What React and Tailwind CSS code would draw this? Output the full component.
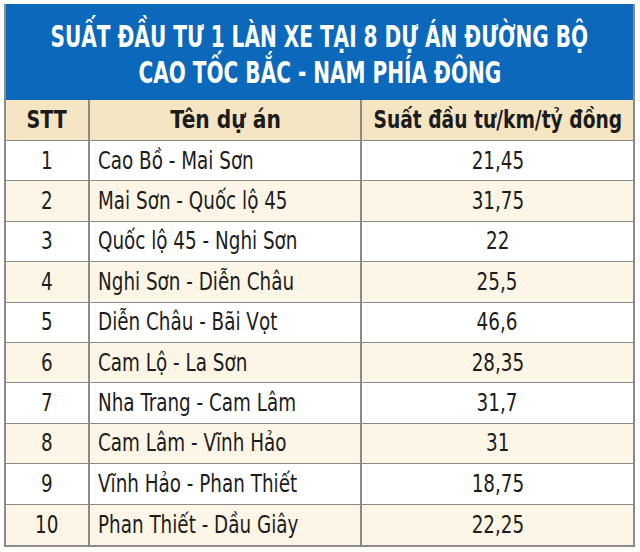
const rows = [
  ["1", "Cao Bồ - Mai Sơn", "21,45"],
  ["2", "Mai Sơn - Quốc lộ 45", "31,75"],
  ["3", "Quốc lộ 45 - Nghi Sơn", "22"],
  ["4", "Nghi Sơn - Diễn Châu", "25,5"],
  ["5", "Diễn Châu - Bãi Vọt", "46,6"],
  ["6", "Cam Lộ - La Sơn", "28,35"],
  ["7", "Nha Trang - Cam Lâm", "31,7"],
  ["8", "Cam Lâm - Vĩnh Hảo", "31"],
  ["9", "Vĩnh Hảo - Phan Thiết", "18,75"],
  ["10", "Phan Thiết - Dầu Giây", "22,25"],
];

const cols = "grid grid-cols-[84px_272px_minmax(0,1fr)]";
const cell = "flex items-center border-[#8a8a8a]";
const txt = "inline-block whitespace-nowrap scale-x-[0.85]";

export default function App() {
  return (
    <div className="w-[640px] h-[552px] bg-white pt-[4px] pl-[4px] font-['DejaVu_Sans_Condensed','DejaVu_Sans',sans-serif] font-stretch-condensed text-[#1c1c1c]">
      <div className="w-[631px] border-l-2 border-r-2 border-b-2 border-[#8a8a8a]">
        <div className="h-[96px] bg-[#0b68bb] flex flex-col items-center justify-center text-white font-bold text-[31px] leading-[36px] pt-[4px]">
          <div className="whitespace-nowrap scale-x-[0.72]">SUẤT ĐẦU TƯ 1 LÀN XE TẠI 8 DỰ ÁN ĐƯỜNG BỘ</div>
          <div className="whitespace-nowrap scale-x-[0.72]">CAO TỐC BẮC - NAM PHÍA ĐÔNG</div>
        </div>
        <div className={`${cols} h-[41px] bg-[#f5e5c3] font-bold text-[25px] border-b border-[#8a8a8a]`}>
          <div className={`${cell} justify-center border-r-2`}><span className={txt}>STT</span></div>
          <div className={`${cell} justify-center border-r-2`}><span className="inline-block whitespace-nowrap scale-x-[0.9]">Tên dự án</span></div>
          <div className={`${cell} justify-center`}><span className="inline-block whitespace-nowrap scale-x-[0.83]">Suất đầu tư/km/tỷ đồng</span></div>
        </div>
        {rows.map((r, i) => (
          <div
            key={r[0]}
            className={`${cols} h-[40.4px] text-[24px] ${i % 2 ? "bg-[#fdf5e6]" : "bg-white"} ${i < rows.length - 1 ? "border-b border-[#8a8a8a]" : ""}`}
          >
            <div className={`${cell} justify-center border-r-2`}><span className={txt}>{r[0]}</span></div>
            <div className={`${cell} pl-[8px] border-r-2`}><span className={`${txt} origin-left`}>{r[1]}</span></div>
            <div className={`${cell} justify-center`}><span className={txt}>{r[2]}</span></div>
          </div>
        ))}
      </div>
    </div>
  );
}
